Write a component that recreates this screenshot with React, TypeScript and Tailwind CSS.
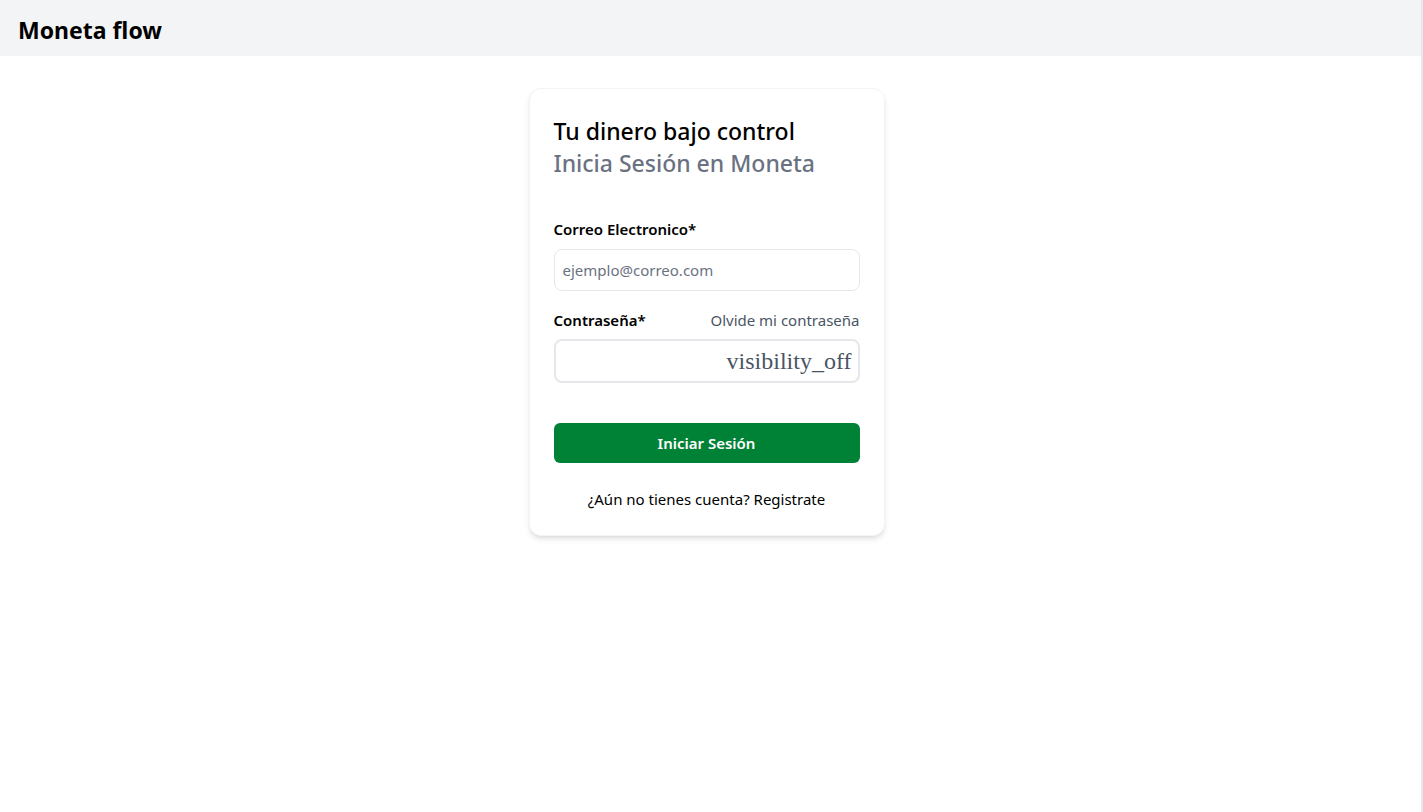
import { useState } from "react";

const App = () => {
  const [showPassword, setShowPassword] = useState(false);

  return (
    <div
      className="min-h-screen bg-white border-r-2 border-gray-200"
      style={{ fontFamily: '"Noto Sans", "Open Sans", sans-serif' }}
    >
      <header className="h-14 bg-gray-100 flex items-center px-[18px] pt-1">
        <h1 className="text-[23px] font-bold text-black">Moneta flow</h1>
      </header>

      <main className="flex justify-center pt-8 pr-2">
        <div className="w-[356px] bg-white rounded-xl border border-gray-100 shadow-md px-6 pt-[26px] pb-6">
          <h2 className="text-[23px] leading-8 font-medium text-black">Tu dinero bajo control</h2>
          <p className="text-[23px] leading-8 font-medium text-gray-500">Inicia Sesión en Moneta</p>

          <form className="mt-[39px]" onSubmit={(e) => e.preventDefault()}>
            <label className="block text-[15px] font-semibold text-black mb-2">Correo Electronico*</label>
            <input
              type="email"
              placeholder="ejemplo@correo.com"
              className="w-full h-[42px] rounded-lg border border-gray-200 px-2 text-[15px] placeholder:text-gray-500 outline-none"
            />

            <div className="flex items-center justify-between mt-[18px] mb-2">
              <label className="text-[15px] font-semibold text-black">Contraseña*</label>
              <a href="#" className="text-[15px] text-gray-600">Olvide mi contraseña</a>
            </div>
            <div className="flex items-center h-11 rounded-lg border-2 border-gray-200 pl-2 pr-1.5">
              <input
                type={showPassword ? "text" : "password"}
                className="flex-1 min-w-0 h-full outline-none text-[15px]"
              />
              <button
                type="button"
                onClick={() => setShowPassword(!showPassword)}
                className="text-[24px] text-gray-600"
                style={{ fontFamily: '"Liberation Serif", serif' }}
              >
                visibility_off
              </button>
            </div>

            <button
              type="submit"
              className="w-full h-10 mt-10 rounded-md bg-green-700 text-white text-[15px] font-semibold"
            >
              Iniciar Sesión
            </button>

            <p className="text-center text-[15px] text-black mt-[25px]">¿Aún no tienes cuenta? Registrate</p>
          </form>
        </div>
      </main>
    </div>
  );
};

export default App;
